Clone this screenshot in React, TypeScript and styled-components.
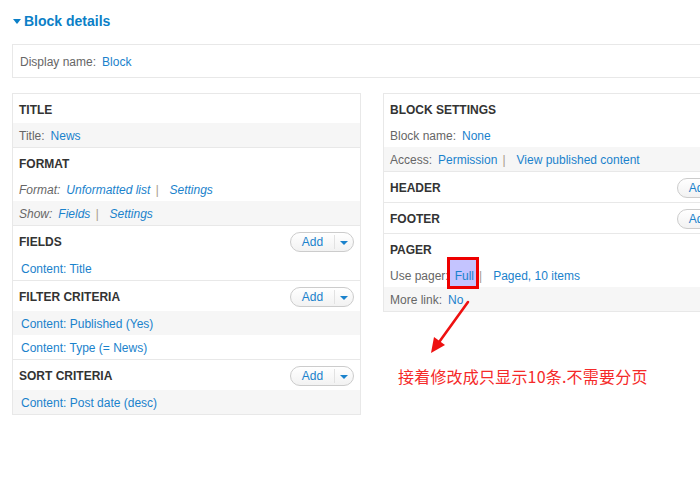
import React from "react";
import styled, { createGlobalStyle } from "styled-components";

const GlobalStyle = createGlobalStyle`
    html, body {
        margin: 0;
        padding: 0;
        background: #ffffff;
        overflow: hidden;
    }

    body {
        font-family: "Liberation Sans", Arial, sans-serif;
        font-size: 12px;
        color: #666666;
    }
`;

const Page = styled.div`
    position: relative;
    width: 760px;
    height: 478px;
    padding: 12px 0 0 12px;
    box-sizing: border-box;
`;

const Heading = styled.div`
    display: flex;
    align-items: center;
    gap: 3px;
    height: 18px;
    color: #0b7fc7;
    font-size: 14px;
    font-weight: bold;
`;

const Caret = styled.span`
    width: 0;
    height: 0;
    margin-left: 1px;
    border-left: 4px solid transparent;
    border-right: 4px solid transparent;
    border-top: 5px solid #0b7fc7;
`;

const DisplayBox = styled.div`
    display: flex;
    align-items: center;
    height: 34px;
    margin-top: 14px;
    padding: 1px 7px 0;
    box-sizing: border-box;
    border: 1px solid #e8e8e8;
`;

const Columns = styled.div`
    display: flex;
    align-items: flex-start;
    gap: 22px;
    margin-top: 15px;
`;

const Panel = styled.div<{ $width: number }>`
    width: ${(p) => p.$width}px;
    flex-shrink: 0;
    border: 1px solid #e8e8e8;
    box-sizing: border-box;
`;

const Section = styled.div`
    & + & {
        border-top: 1px solid #e8e8e8;
    }
`;

const SectionHeader = styled.div`
    display: flex;
    align-items: center;
    justify-content: space-between;
    min-height: 29px;
    padding: 6px 6px 4px;
    box-sizing: border-box;
    color: #333333;
    font-weight: bold;
`;

const Row = styled.div<{ $alt?: boolean; $italic?: boolean; $indent?: number }>`
    display: flex;
    align-items: center;
    height: 24px;
    padding-top: 2px;
    padding-left: ${(p) => p.$indent ?? 6}px;
    box-sizing: border-box;
    background: ${(p) => (p.$alt ? "#f6f6f6" : "#ffffff")};
    font-style: ${(p) => (p.$italic ? "italic" : "normal")};
    white-space: nowrap;
`;

const Label = styled.span`
    color: #666666;
    margin-right: 6px;
`;

const Link = styled.span`
    position: relative;
    color: #1a82cc;
`;

const Sep = styled.span`
    color: #a89a8c;
    margin: 0 11px 0 5px;
`;

const AddButton = styled.div`
    display: flex;
    align-items: center;
    height: 20px;
    box-sizing: border-box;
    border: 1px solid #cccccc;
    border-radius: 10px;
    background: linear-gradient(#ffffff, #f2f2f2);
    flex-shrink: 0;
`;

const AddText = styled.span`
    width: 43px;
    text-align: center;
    color: #1a82cc;
    font-weight: normal;
    line-height: 14px;
    border-right: 1px solid #e2e2e2;
`;

const AddArrow = styled.span`
    width: 18px;
    display: flex;
    justify-content: center;

    &::after {
        content: "";
        border-left: 4px solid transparent;
        border-right: 4px solid transparent;
        border-top: 4px solid #1a82cc;
        margin-top: 1px;
    }
`;

const Mark = styled.span`
    position: absolute;
    left: -8px;
    right: -5px;
    top: -12px;
    height: 32px;
    box-sizing: border-box;
    border: 3px solid #ee0000;
    background: #c4c4ff;
`;

const MarkText = styled.span`
    position: relative;
`;

const ArrowDrawing = styled.svg`
    position: absolute;
    left: 425px;
    top: 296px;
`;

const Note = styled.div`
    position: absolute;
    left: 398px;
    top: 364px;
    color: #f52a2a;
    font-family: "Noto Sans CJK SC", "Liberation Sans", sans-serif;
    font-size: 16px;
    letter-spacing: 0.2px;
    white-space: nowrap;
`;

const Add = () => (
    <AddButton>
        <AddText>Add</AddText>
        <AddArrow />
    </AddButton>
);

export default function App() {
    return (
        <>
            <GlobalStyle />
            <Page>
                <Heading>
                    <Caret />
                    Block details
                </Heading>

                <DisplayBox>
                    <Label>Display name:</Label>
                    <Link>Block</Link>
                </DisplayBox>

                <Columns>
                    <Panel $width={349}>
                        <Section>
                            <SectionHeader>TITLE</SectionHeader>
                            <Row $alt>
                                <Label>Title:</Label>
                                <Link>News</Link>
                            </Row>
                        </Section>

                        <Section>
                            <SectionHeader>FORMAT</SectionHeader>
                            <Row $italic>
                                <Label>Format:</Label>
                                <Link>Unformatted list</Link>
                                <Sep>|</Sep>
                                <Link>Settings</Link>
                            </Row>
                            <Row $alt $italic>
                                <Label>Show:</Label>
                                <Link>Fields</Link>
                                <Sep>|</Sep>
                                <Link>Settings</Link>
                            </Row>
                        </Section>

                        <Section>
                            <SectionHeader>
                                FIELDS
                                <Add />
                            </SectionHeader>
                            <Row $indent={8}>
                                <Link>Content: Title</Link>
                            </Row>
                        </Section>

                        <Section>
                            <SectionHeader>
                                FILTER CRITERIA
                                <Add />
                            </SectionHeader>
                            <Row $alt $indent={8}>
                                <Link>Content: Published (Yes)</Link>
                            </Row>
                            <Row $indent={8}>
                                <Link>Content: Type (= News)</Link>
                            </Row>
                        </Section>

                        <Section>
                            <SectionHeader>
                                SORT CRITERIA
                                <Add />
                            </SectionHeader>
                            <Row $alt $indent={8}>
                                <Link>Content: Post date (desc)</Link>
                            </Row>
                        </Section>
                    </Panel>

                    <Panel $width={365}>
                        <Section>
                            <SectionHeader>BLOCK SETTINGS</SectionHeader>
                            <Row>
                                <Label>Block name:</Label>
                                <Link>None</Link>
                            </Row>
                            <Row $alt>
                                <Label>Access:</Label>
                                <Link>Permission</Link>
                                <Sep>|</Sep>
                                <Link>View published content</Link>
                            </Row>
                        </Section>

                        <Section>
                            <SectionHeader>
                                HEADER
                                <Add />
                            </SectionHeader>
                        </Section>

                        <Section>
                            <SectionHeader>
                                FOOTER
                                <Add />
                            </SectionHeader>
                        </Section>

                        <Section>
                            <SectionHeader>PAGER</SectionHeader>
                            <Row>
                                <Label>Use pager:</Label>
                                <Link>
                                    <Mark />
                                    <MarkText>Full</MarkText>
                                </Link>
                                <Sep>|</Sep>
                                <Link>Paged, 10 items</Link>
                            </Row>
                            <Row $alt>
                                <Label>More link:</Label>
                                <Link>No</Link>
                            </Row>
                        </Section>
                    </Panel>
                </Columns>

                <ArrowDrawing width="50" height="62" viewBox="0 0 50 62">
                    <line x1="43" y1="6" x2="12" y2="49" stroke="#ee1111" strokeWidth="2.6" strokeLinecap="round" />
                    <polygon points="6,57 9,41 20,49" fill="#ee1111" />
                </ArrowDrawing>

                <Note>接着修改成只显示10条.不需要分页</Note>
            </Page>
        </>
    );
}
